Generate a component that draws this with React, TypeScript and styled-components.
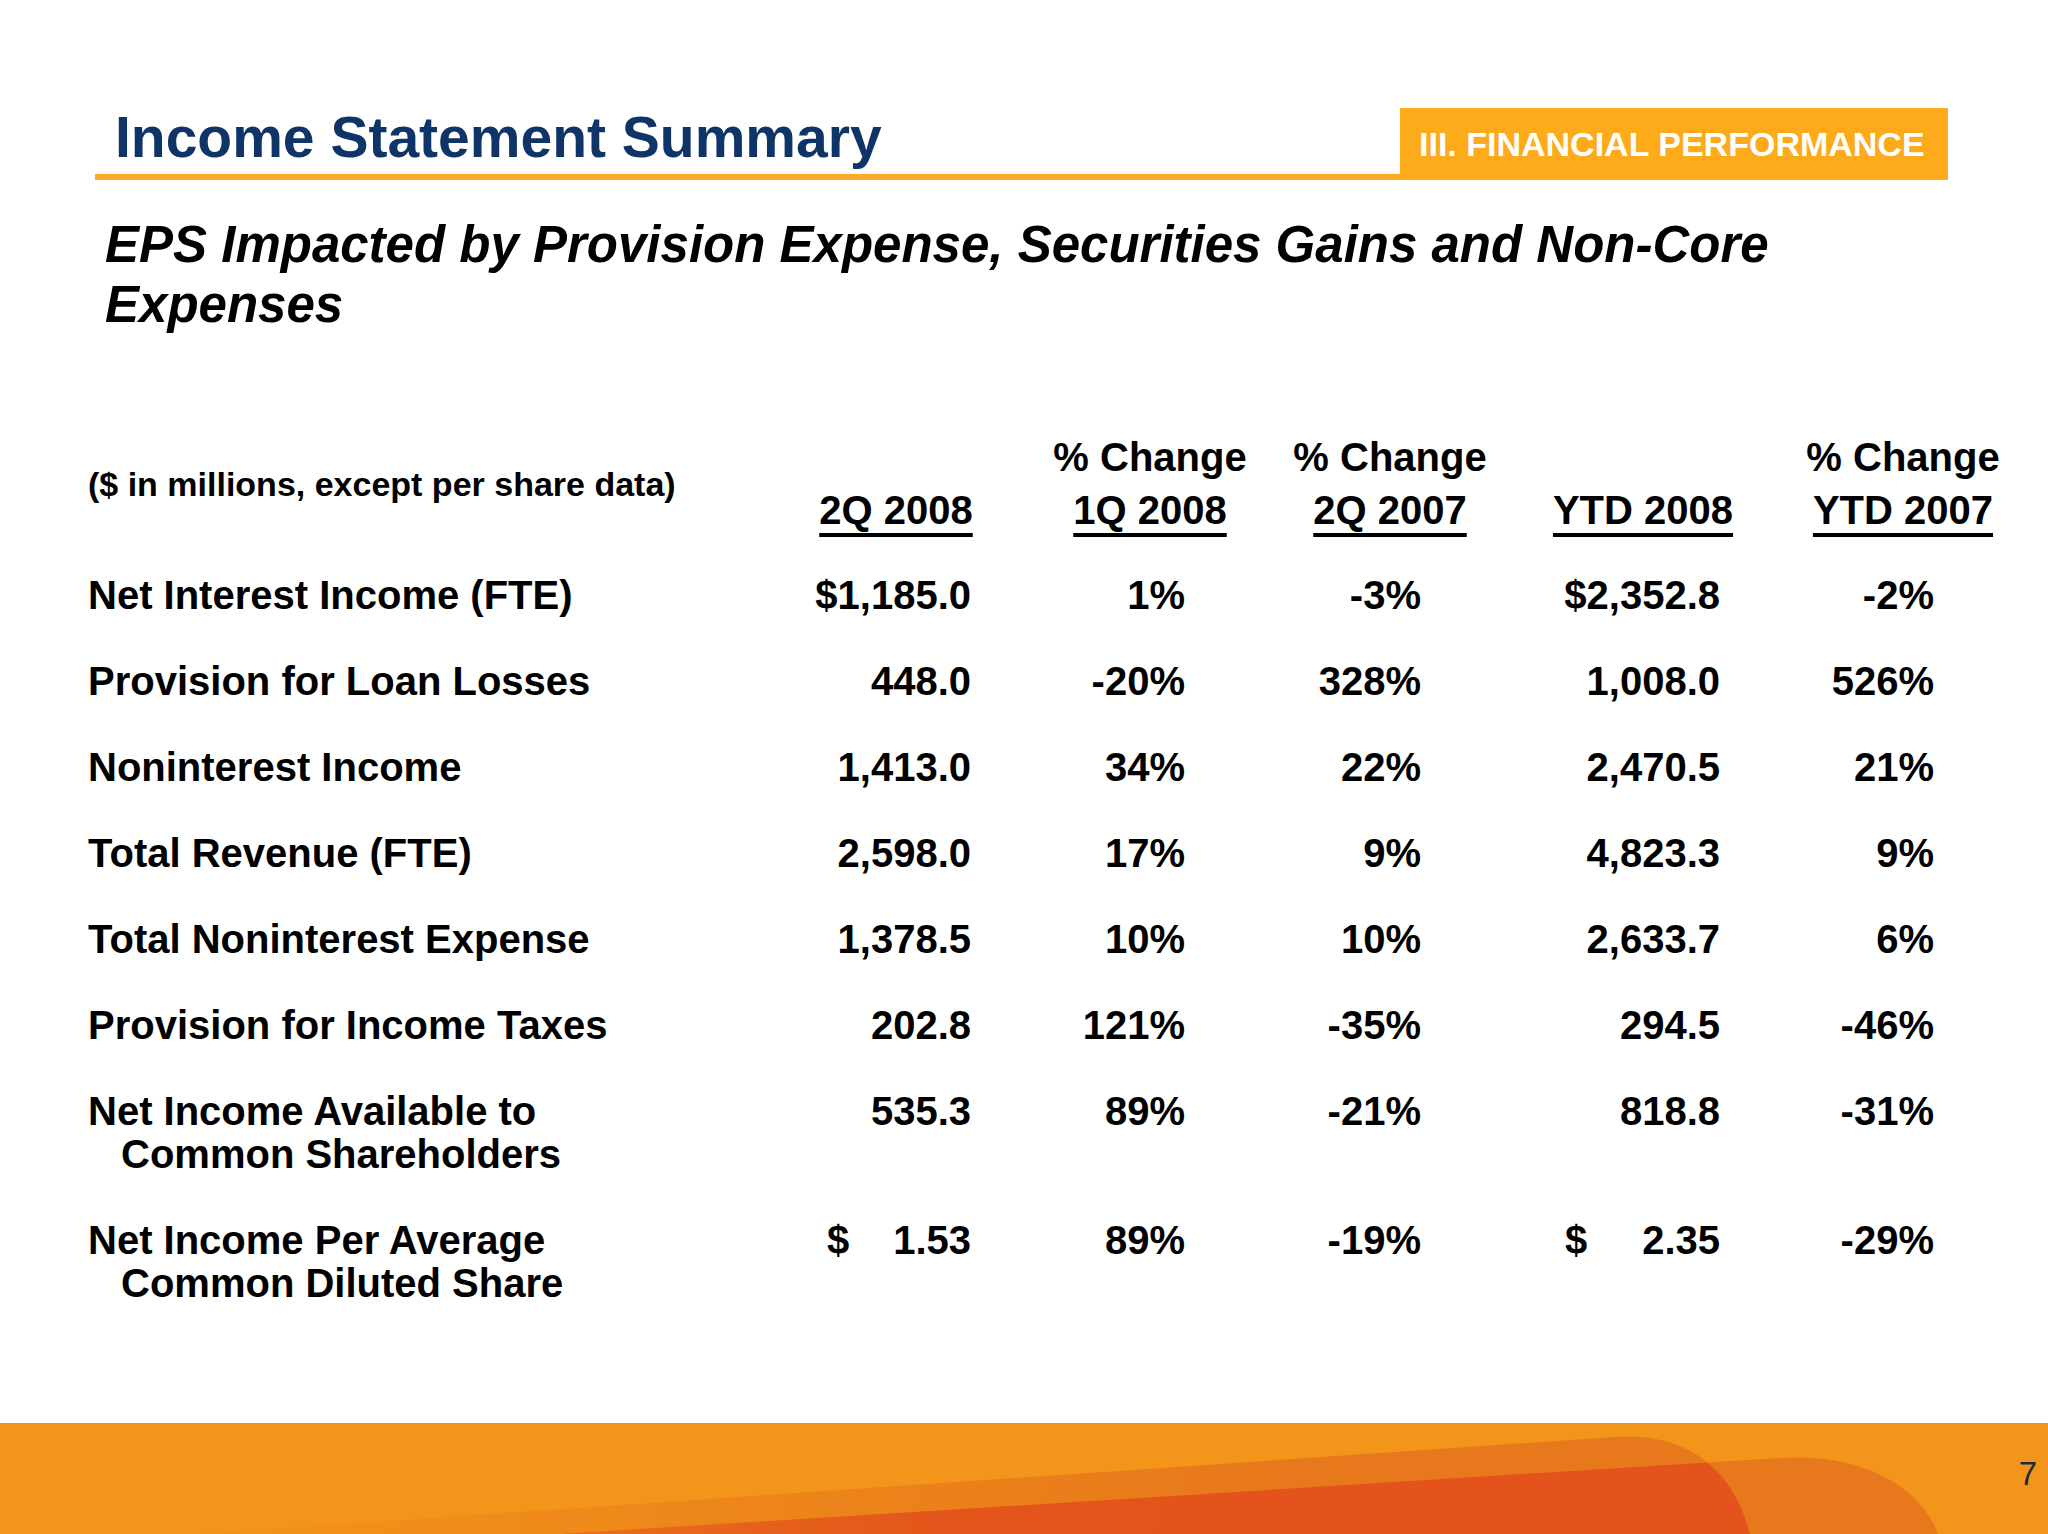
import styled, { createGlobalStyle } from "styled-components";

const GlobalStyle = createGlobalStyle`
  html,
  body {
    margin: 0;
    padding: 0;
    background: #ffffff;
  }

  body {
    font-family: "Liberation Sans", Arial, sans-serif;
    color: #000000;
  }
`;

type Cell = string | { dollar: string };

interface Column {
  label: [string, string];
  ml: number;
  width: number;
  pr: number;
  dollarPl: number;
}

const columns: Column[] = [
  { label: ["", "2Q 2008"], ml: 0, width: 152, pr: 1, dollarPl: 7 },
  { label: ["% Change", "1Q 2008"], ml: 68, width: 220, pr: 75, dollarPl: 0 },
  { label: ["% Change", "2Q 2007"], ml: 20, width: 220, pr: 79, dollarPl: 0 },
  { label: ["", "YTD 2008"], ml: 33, width: 220, pr: 33, dollarPl: 32 },
  { label: ["% Change", "YTD 2007"], ml: 40, width: 220, pr: 79, dollarPl: 0 },
];

const rows: { label: string[]; values: Cell[] }[] = [
  {
    label: ["Net Interest Income (FTE)"],
    values: ["$1,185.0", "1%", "-3%", "$2,352.8", "-2%"],
  },
  {
    label: ["Provision for Loan Losses"],
    values: ["448.0", "-20%", "328%", "1,008.0", "526%"],
  },
  {
    label: ["Noninterest Income"],
    values: ["1,413.0", "34%", "22%", "2,470.5", "21%"],
  },
  {
    label: ["Total Revenue (FTE)"],
    values: ["2,598.0", "17%", "9%", "4,823.3", "9%"],
  },
  {
    label: ["Total Noninterest Expense"],
    values: ["1,378.5", "10%", "10%", "2,633.7", "6%"],
  },
  {
    label: ["Provision for Income Taxes"],
    values: ["202.8", "121%", "-35%", "294.5", "-46%"],
  },
  {
    label: ["Net Income Available to", "Common Shareholders"],
    values: ["535.3", "89%", "-21%", "818.8", "-31%"],
  },
  {
    label: ["Net Income Per Average", "Common Diluted Share"],
    values: [{ dollar: "1.53" }, "89%", "-19%", { dollar: "2.35" }, "-29%"],
  },
];

export default function App() {
  return (
    <Page>
      <GlobalStyle />
      <Header>
        <TitleBlock>
          <Title>Income Statement Summary</Title>
        </TitleBlock>
        <SectionBadge>III. FINANCIAL PERFORMANCE</SectionBadge>
      </Header>

      <Subtitle>
        EPS Impacted by Provision Expense, Securities Gains and Non-Core
        Expenses
      </Subtitle>

      <Table>
        <HeadRow>
          <CornerLabel>($ in millions, except per share data)</CornerLabel>
          {columns.map((col) => (
            <HeadCell key={col.label[1]} $ml={col.ml} $w={col.width}>
              <HeadLine>{col.label[0] || "\u00a0"}</HeadLine>
              <HeadLine $underline>{col.label[1]}</HeadLine>
            </HeadCell>
          ))}
        </HeadRow>

        <Body>
          {rows.map((row) => (
            <Row key={row.label[0]}>
              <Label>
                {row.label.map((line, i) => (
                  <LabelLine key={line} $indent={i > 0}>
                    {line}
                  </LabelLine>
                ))}
              </Label>
              {row.values.map((value, i) => {
                const col = columns[i];
                if (typeof value === "string") {
                  return (
                    <Value key={i} $ml={col.ml} $w={col.width} $pr={col.pr}>
                      {value}
                    </Value>
                  );
                }
                return (
                  <Value
                    key={i}
                    $ml={col.ml}
                    $w={col.width}
                    $pr={col.pr}
                    $pl={col.dollarPl}
                    $split
                  >
                    <span>$</span>
                    <span>{value.dollar}</span>
                  </Value>
                );
              })}
            </Row>
          ))}
        </Body>
      </Table>

      <Footer>
        <FooterArt viewBox="0 0 2048 111" preserveAspectRatio="none">
          <defs>
            <linearGradient id="waveFade" x1="196" y1="0" x2="1300" y2="0" gradientUnits="userSpaceOnUse">
              <stop offset="0" stopColor="#f3931a" />
              <stop offset="1" stopColor="#e7781b" />
            </linearGradient>
            <linearGradient id="redFade" x1="561" y1="0" x2="1300" y2="0" gradientUnits="userSpaceOnUse">
              <stop offset="0" stopColor="#e86f1c" />
              <stop offset="0.5" stopColor="#e3561b" />
              <stop offset="1" stopColor="#e3531b" />
            </linearGradient>
            <clipPath id="firstWave">
              <path d="M196,111 L1615,14 C1690,8 1735,50 1750,111 Z" />
            </clipPath>
          </defs>
          <path d="M196,111 L1615,14 C1690,8 1735,50 1750,111 Z" fill="url(#waveFade)" />
          <path d="M561,111 L1780,35 C1860,30 1920,62 1938,111 Z" fill="#e8781c" />
          <path
            d="M561,111 L1780,35 C1860,30 1920,62 1938,111 Z"
            fill="url(#redFade)"
            clipPath="url(#firstWave)"
          />
        </FooterArt>
        <PageNumber>7</PageNumber>
      </Footer>
    </Page>
  );
}

const Page = styled.div`
  width: 2048px;
  height: 1534px;
  display: flex;
  flex-direction: column;
  overflow: hidden;
  background: #ffffff;
`;

const Header = styled.div`
  display: flex;
  align-items: flex-end;
  margin: 104px 100px 0 95px;
`;

const TitleBlock = styled.div`
  flex: 1;
  padding: 0 0 4px 20px;
  border-bottom: 6px solid #fbaa25;
`;

const Title = styled.h1`
  margin: 0;
  font-size: 57px;
  line-height: 66px;
  font-weight: 700;
  color: #0e3468;
`;

const SectionBadge = styled.div`
  box-sizing: border-box;
  width: 548px;
  height: 72px;
  padding: 19px 0 0 19px;
  background: #fdab1a;
  color: #ffffff;
  font-size: 34px;
  line-height: 34px;
  font-weight: 700;
  white-space: nowrap;
`;

const Subtitle = styled.h2`
  width: 1760px;
  margin: 35px 0 0 105px;
  font-size: 51px;
  line-height: 60px;
  font-weight: 700;
  font-style: italic;
`;

const Table = styled.div`
  display: flex;
  flex-direction: column;
  margin: 96px 0 0 88px;
  font-size: 40px;
  font-weight: 700;
`;

const HeadRow = styled.div`
  display: flex;
  align-items: center;
`;

const CornerLabel = styled.div`
  width: 732px;
  font-size: 34px;
  line-height: 40px;
  white-space: nowrap;
`;

const HeadCell = styled.div<{ $ml: number; $w: number }>`
  display: flex;
  flex-direction: column;
  align-items: center;
  flex: none;
  width: ${({ $w }) => $w}px;
  margin-left: ${({ $ml }) => $ml}px;
  white-space: nowrap;
`;

const HeadLine = styled.div<{ $underline?: boolean }>`
  line-height: 53px;
  text-decoration: ${({ $underline }) => ($underline ? "underline" : "none")};
  text-decoration-thickness: 4px;
  text-underline-offset: 9px;
`;

const Body = styled.div`
  display: flex;
  flex-direction: column;
  gap: 43px;
  margin-top: 37px;
`;

const Row = styled.div`
  display: flex;
  align-items: flex-start;
  line-height: 43px;
`;

const Label = styled.div`
  width: 732px;
  flex: none;
`;

const LabelLine = styled.div<{ $indent?: boolean }>`
  padding-left: ${({ $indent }) => ($indent ? 33 : 0)}px;
  white-space: nowrap;
`;

const Value = styled.div<{
  $ml: number;
  $w: number;
  $pr: number;
  $pl?: number;
  $split?: boolean;
}>`
  box-sizing: border-box;
  display: flex;
  justify-content: ${({ $split }) => ($split ? "space-between" : "flex-end")};
  flex: none;
  width: ${({ $w }) => $w}px;
  margin-left: ${({ $ml }) => $ml}px;
  padding-right: ${({ $pr }) => $pr}px;
  padding-left: ${({ $pl }) => $pl ?? 0}px;
  white-space: nowrap;
`;

const Footer = styled.div`
  position: relative;
  display: flex;
  justify-content: flex-end;
  align-items: flex-start;
  height: 111px;
  margin-top: auto;
  background: #f3951a;
`;

const FooterArt = styled.svg`
  position: absolute;
  inset: 0;
  width: 100%;
  height: 100%;
`;

const PageNumber = styled.div`
  position: relative;
  padding: 34px 11px 0 0;
  font-size: 33px;
  line-height: 33px;
  color: #1d2b3a;
`;
